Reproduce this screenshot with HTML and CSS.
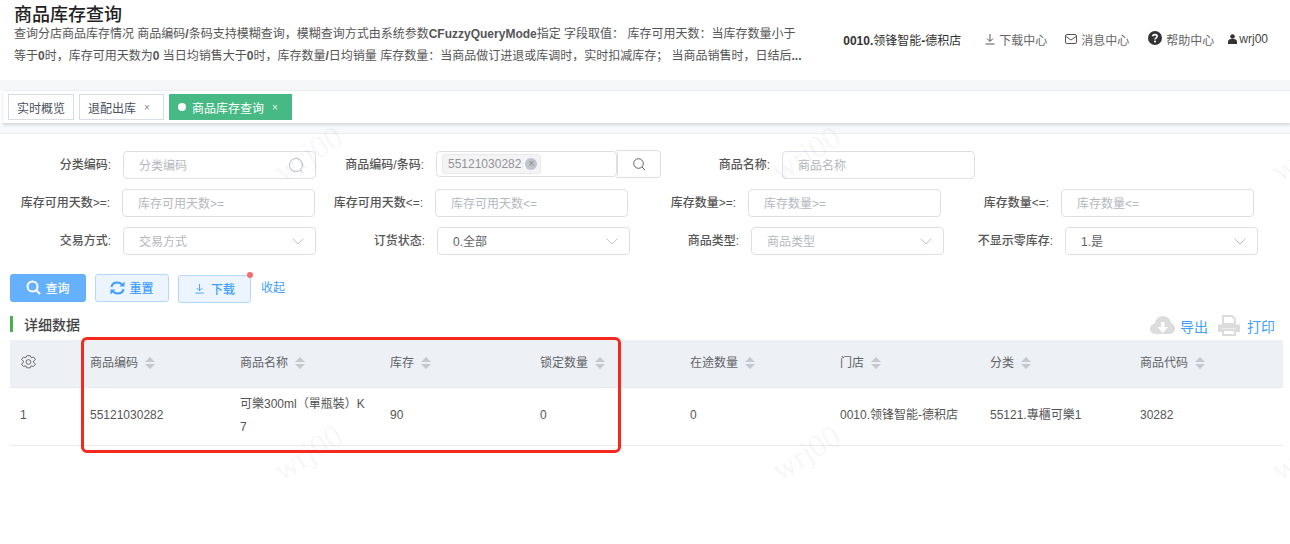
FILE: index.html
```html
<!DOCTYPE html>
<html lang="zh">
<head>
<meta charset="utf-8">
<title>商品库存查询</title>
<link rel="stylesheet" href="styles.css">
</head>
<body>
<svg class="defs" width="0" height="0" aria-hidden="true">
  <symbol id="sort" viewBox="0 0 10 12"><path d="M5 0l5 5H0zM5 12L0 7h10z"/></symbol>
  <symbol id="chev" viewBox="0 0 12 7"><path d="M.5.5L6 6l5.500-5.500" fill="none" stroke="currentColor"/></symbol>
  <symbol id="down" viewBox="0 0 12 12"><path d="M6 1v7M3 5.500L6 8.500l3-3M1.500 11h9" fill="none" stroke="currentColor"/></symbol>
</svg>
<header class="top">
  <div class="intro">
    <h1 class="title">商品库存查询</h1>
    <p class="desc">查询分店商品库存情况 商品编码<b>/</b>条码支持模糊查询，模糊查询方式由系统参数<b>CFuzzyQueryMode</b>指定 字段取值： 库存可用天数：当库存数量小于等于<b>0</b>时，库存可用天数为<b>0</b> 当日均销售大于<b>0</b>时，库存数量<b>/</b>日均销量 库存数量：当商品做订进退或库调时，实时扣减库存； 当商品销售时，日结后<b>...</b></p>
  </div>
  <nav class="tools">
    <span class="store"><b>0010.</b>领锋智能<b>-</b>德积店</span>
    <span class="tool t-dl"><svg class="ico ico-dl" width="12" height="12"><use href="#down"/></svg>下载中心</span>
    <span class="tool t-msg"><svg class="ico" width="12" height="12" viewBox="0 0 12 12"><rect x=".5" y="1.500" width="11" height="9" rx="1.500" fill="none" stroke="currentColor"/><path d="M1 3.500l5 3.500 5-3.500" fill="none" stroke="currentColor"/></svg>消息中心</span>
    <span class="tool t-help"><svg class="help" width="14" height="14" viewBox="0 0 14 14"><circle cx="7" cy="7" r="7" fill="#333"/><path d="M4.800 5.300C4.900 3 9.200 3 9.200 5.300 9.200 6.800 7 6.800 7 8.500" fill="none" stroke="#fff" stroke-width="1.600"/><rect x="6.100" y="9.600" width="1.800" height="1.800" fill="#fff"/></svg>帮助中心</span>
    <span class="user"><svg width="9" height="10" viewBox="0 0 9 10"><circle cx="4.500" cy="2.500" r="2.300" fill="#333"/><path d="M0 10V7.500C0 5.500 2 5 4.500 5S9 5.500 9 7.500V10z" fill="#333"/></svg>wrj00</span>
  </nav>
</header>
<div class="strip-a"></div>
<div class="tabs">
  <span class="tab tab-a">实时概览</span>
  <span class="tab tab-b">退配出库<i class="x">×</i></span>
  <span class="tab active"><i class="dot"></i>商品库存查询<i class="x">×</i></span>
</div>
<div class="strip-b"></div>
<main class="main">
  <div class="row">
    <div class="lab w123">分类编码:</div>
    <div class="inp ph">分类编码<svg class="mag" width="17" height="17" viewBox="0 0 17 17"><circle cx="8" cy="8" r="6.500" fill="none" stroke="currentColor"/><path d="M12.500 13l2 2.500" stroke="currentColor"/></svg></div>
    <div class="lab w120">商品编码/条码:</div>
    <div class="inp mid"><span class="chip">55121030282<i class="chip-x">×</i></span></div>
    <div class="sbtn"><svg width="13" height="13" viewBox="0 0 13 13"><circle cx="5.500" cy="5.500" r="4.800" fill="none" stroke="#606266"/><path d="M9 9l3 3" stroke="#606266"/></svg></div>
    <div class="lab w121">商品名称:</div>
    <div class="inp ph">商品名称</div>
  </div>
  <div class="row">
    <div class="lab w122">库存可用天数&gt;=:</div>
    <div class="inp ph">库存可用天数&gt;=</div>
    <div class="lab w120">库存可用天数&lt;=:</div>
    <div class="inp ph">库存可用天数&lt;=</div>
    <div class="lab w120">库存数量&gt;=:</div>
    <div class="inp ph">库存数量&gt;=</div>
    <div class="lab w120">库存数量&lt;=:</div>
    <div class="inp ph">库存数量&lt;=</div>
  </div>
  <div class="row">
    <div class="lab w123">交易方式:</div>
    <div class="inp ph">交易方式<svg class="chev" width="12" height="7"><use href="#chev"/></svg></div>
    <div class="lab w121">订货状态:</div>
    <div class="inp val">0.全部<svg class="chev" width="12" height="7"><use href="#chev"/></svg></div>
    <div class="lab w121">商品类型:</div>
    <div class="inp ph">商品类型<svg class="chev" width="12" height="7"><use href="#chev"/></svg></div>
    <div class="lab w121">不显示零库存:</div>
    <div class="inp val">1.是<svg class="chev" width="12" height="7"><use href="#chev"/></svg></div>
  </div>
  <div class="actions">
    <span class="btn primary"><svg width="15" height="15" viewBox="0 0 15 15"><circle cx="6.500" cy="6.500" r="5" fill="none" stroke="#fff" stroke-width="2"/><path d="M10 10l4 4" stroke="#fff" stroke-width="2.200"/></svg>查询</span>
    <span class="btn plain reset"><svg width="15" height="14" viewBox="0 0 15 14"><path d="M1.500 6C2 3 4.500 1.500 7.500 1.500c2 0 3.500 1 4.500 2M13.500 8c-.5 3-3 4.500-6 4.500-2 0-3.500-1-4.500-2" fill="none" stroke="#409eff" stroke-width="2"/><path d="M14.500 .5v5h-5zM.5 13.500v-5h5z" fill="#409eff"/></svg>重置</span>
    <span class="btn plain dl"><svg width="11" height="11"><use href="#down"/></svg>下载<i class="badge"></i></span>
    <span class="fold">收起</span>
  </div>
  <div class="section">
    <h2 class="sec-title">详细数据</h2>
    <div class="exports">
      <svg width="25" height="21" viewBox="0 0 25 21"><path d="M6 19C2.500 19 0 16.800 0 13.800 0 11 2 9 4.700 8.700 5.500 4 9 1 13 1c4.300 0 7.500 3 8 7 2.300.6 4 2.800 4 5.300 0 3-2.400 5.700-5.500 5.700z" fill="#dcdcdc"/><path d="M11 7h3.500v5H18l-5.300 6L7.500 12H11z" fill="#fff"/></svg>
      <span class="exp">导出</span>
      <svg class="print" width="22" height="21" viewBox="0 0 22 21"><path d="M5 1h9l3 3v5H5z" fill="none" stroke="#dcdcdc" stroke-width="2"/><path d="M0 9.500h22V17h-4v-3.500H4V17H0z" fill="#dcdcdc"/><path d="M5 15h12v5H5z" fill="none" stroke="#dcdcdc" stroke-width="2"/></svg>
      <span class="exp">打印</span>
    </div>
  </div>
  <table class="grid">
    <colgroup><col class="c0"><col class="c"><col class="c"><col class="c"><col class="c"><col class="c"><col class="c"><col class="c"><col></colgroup>
    <thead>
      <tr>
        <th><svg class="gear" width="15" height="14" viewBox="2 1 10 12" preserveAspectRatio="none"><path class="gear-line" d="M5.800.8h2.400l.5 1.700 1.700-.5 1.300 2.100-1.300 1.200v1.400l1.300 1.200-1.300 2.100-1.700-.5-.5 1.700H5.800l-.5-1.700-1.700.5-1.300-2.100 1.300-1.200V5.300L2.300 4.100 3.600 2l1.700.5z" transform="translate(0 .8)"/><ellipse class="gear-line" cx="7" cy="7" rx="1.600" ry="2"/></svg></th>
        <th>商品编码<svg class="sort" width="10" height="12"><use href="#sort"/></svg></th>
        <th>商品名称<svg class="sort" width="10" height="12"><use href="#sort"/></svg></th>
        <th>库存<svg class="sort" width="10" height="12"><use href="#sort"/></svg></th>
        <th>锁定数量<svg class="sort" width="10" height="12"><use href="#sort"/></svg></th>
        <th>在途数量<svg class="sort" width="10" height="12"><use href="#sort"/></svg></th>
        <th>门店<svg class="sort" width="10" height="12"><use href="#sort"/></svg></th>
        <th>分类<svg class="sort" width="10" height="12"><use href="#sort"/></svg></th>
        <th>商品代码<svg class="sort" width="10" height="12"><use href="#sort"/></svg></th>
      </tr>
    </thead>
    <tbody>
      <tr>
        <td>1</td><td>55121030282</td><td>可樂300ml（單瓶裝）K7</td><td>90</td><td>0</td><td>0</td><td>0010.领锋智能-德积店</td><td>55121.專櫃可樂1</td><td>30282</td>
      </tr>
    </tbody>
  </table>
  <span class="wm w-a">wrj00</span>
  <span class="wm w-b">wrj00</span>
  <span class="wm w-c">wrj00</span>
  <span class="wm w-d">wrj00</span>
  <span class="wm w-e">wrj00</span>
  <span class="wm w-f">wrj00</span>
  <div class="redbox"></div>
</main>
</body>
</html>
```
FILE: styles.css
```css
* { box-sizing: border-box; }
html, body { margin: 0; padding: 0; }
body {
  width: 1290px;
  height: 544px;
  overflow: hidden;
  background: #fff;
  font-family: "Liberation Sans", "Noto Sans CJK SC", sans-serif;
  font-size: 12px;
  color: #606266;
}
i { font-style: normal; }
.defs { position: absolute; }

.top { height: 80px; display: flex; justify-content: space-between; padding-left: 14px; }
.intro { width: 792px; }
.title { margin: 5px 0 0; font-size: 18px; line-height: 20px; font-weight: 500; color: #222; }
.desc { margin: -2px 0 0; font-size: 12px; line-height: 22px; color: #555; }
.tools { display: flex; align-items: center; padding-right: 22px; color: #666; height: 78px; }
.store { color: #333; margin-right: 23px; width: 118px; white-space: nowrap; }
.tool { display: flex; align-items: center; white-space: nowrap; }
.ico { margin-right: 4px; color: #555; }
.ico-dl { margin-right: 3px; }
.t-dl { margin-right: 18px; }
.t-msg { margin-right: 19px; }
.t-help { margin-right: 14px; }
.help { margin-right: 4px; position: relative; top: -1px; }
.user { display: flex; align-items: center; gap: 2px; color: #444; }

.strip-a { height: 10px; background: #f6f7f9; }
.tabs {
  height: 33px;
  margin-left: 3px;
  padding: 3px 0 0 5px;
  display: flex;
  gap: 5px;
  background: #fff;
  border-top: 1px solid #eceef2;
  box-shadow: 0 2px 3px rgba(0, 0, 0, .14);
  position: relative;
}
.tab {
  height: 26px;
  padding: 0 8px;
  display: flex;
  align-items: center;
  border: 1px solid #d8dce5;
  background: #fff;
  color: #495060;
  white-space: nowrap;
}
.tab-a { width: 66px; }
.tab-b { width: 85px; }
.x { margin-left: 8px; font-size: 10px; color: #888; }
.tab.active { width: 123px; background: #47b984; border-color: #47b984; color: #fff; }
.tab.active .x { color: #e4f5ec; }
.dot { width: 8px; height: 8px; border-radius: 50%; background: #fff; margin-right: 6px; }
.strip-b { height: 11px; background: #f7f8fb; border-bottom: 1px solid #eceef2; }

.main { position: relative; padding-top: 17px; height: 410px; }
.row { display: flex; height: 28px; margin-bottom: 10px; align-items: flex-start; }
.lab {
  height: 28px;
  line-height: 28px;
  padding-right: 12px;
  text-align: right;
  color: #555;
  font-weight: 500;
  white-space: nowrap;
}
.w120 { width: 120px; }
.w121 { width: 121px; }
.w122 { width: 122px; }
.w123 { width: 123px; }
.inp {
  position: relative;
  width: 193px;
  height: 28px;
  line-height: 28px;
  padding-left: 15px;
  border: 1px solid #dcdfe6;
  border-radius: 4px;
  background: #fff;
  white-space: nowrap;
}
.ph { color: #b4b8c0; }
.val { color: #606266; }
.mid { width: 181px; height: 26px; padding: 2px 0 0 5px; line-height: 20px; }
.chip {
  display: inline-flex;
  align-items: center;
  height: 20px;
  width: 99px;
  padding: 0 4px 0 5px;
  background: #f4f4f5;
  border: 1px solid #e9e9eb;
  border-radius: 3px;
  color: #909399;
}
.chip-x {
  width: 12px; height: 12px;
  margin-left: 4px;
  flex: none;
  border-radius: 50%;
  background: #c0c4cc;
  color: #8a8d93;
  font-size: 10px;
  line-height: 12px;
  text-align: center;
}
.sbtn {
  width: 44px;
  height: 28px;
  margin-top: -1px;
  display: flex;
  align-items: center;
  justify-content: center;
  border: 1px solid #dcdfe6;
  border-radius: 0 4px 4px 0;
  background: #fff;
}
.mag { position: absolute; right: 10px; top: 5px; color: #b8bcc4; }
.chev { position: absolute; right: 11px; top: 10px; color: #c0c4cc; }

.actions { display: flex; align-items: flex-start; height: 29px; margin-top: 19px; padding-left: 10px; }
.btn {
  display: flex;
  align-items: center;
  justify-content: center;
  height: 28px;
  padding-bottom: 1px;
  border-radius: 3px;
  white-space: nowrap;
  position: relative;
  font-weight: 500;
}
.primary { width: 76px; background: #66b1ff; color: #fff; gap: 4px; }
.plain { background: #ecf5ff; border: 1px solid #b3d8ff; color: #409eff; }
.reset { width: 74px; margin-left: 9px; gap: 4px; }
.dl { width: 73px; margin-left: 9px; margin-top: 1px; gap: 6px; }
.badge { position: absolute; right: -3px; top: -4px; width: 6px; height: 6px; border-radius: 50%; background: #f56c6c; }
.fold { margin-left: 10px; line-height: 28px; color: #409eff; }

.section { display: flex; justify-content: space-between; height: 25px; margin-top: 12px; padding: 0 15px 0 10px; }
.sec-title {
  margin: 1px 0 0;
  height: 16px;
  padding-left: 11px;
  border-left: 3px solid #4caf50;
  font-size: 14px;
  line-height: 18px;
  font-weight: 500;
  color: #444;
}
.exports { display: flex; align-items: center; height: 21px; }
.exp { margin-left: 5px; font-size: 14px; color: #409eff; }
.print { margin-left: 10px; margin-right: 2px; }

.grid { width: 1273px; margin-left: 10px; border-collapse: collapse; table-layout: fixed; }
.c0 { width: 70px; }
.c { width: 150px; }
.grid th {
  height: 47px;
  padding: 0 10px 3px;
  background: #edf0f5;
  text-align: left;
  font-weight: 400;
  color: #5f6368;
  border-bottom: 1px solid #e8eaec;
  white-space: nowrap;
}
.grid td {
  height: 58px;
  padding: 0 10px 1px;
  line-height: 23px;
  color: #555;
  border-bottom: 1px solid #e8eaec;
  word-break: break-all;
}
.sort { margin-left: 7px; vertical-align: -2px; fill: #c5c8ce; }
.gear { display: block; margin-left: 1px; }
.gear-line { fill: none; stroke: #707070; stroke-width: 1; vector-effect: non-scaling-stroke; stroke-linejoin: round; }

.wm {
  position: absolute;
  transform: translate(-50%, -50%) rotate(-32deg);
  font-family: "Liberation Serif", serif;
  font-size: 32px;
  color: rgba(0, 0, 0, .055);
  pointer-events: none;
  white-space: nowrap;
}
.w-a { left: 308px; top: 20px; }
.w-b { left: 806px; top: 20px; }
.w-c { left: 1306px; top: 20px; }
.w-d { left: 308px; top: 319px; }
.w-e { left: 806px; top: 319px; }
.w-f { left: 1306px; top: 319px; }

.redbox {
  position: absolute;
  left: 81px;
  top: 203px;
  width: 540px;
  height: 116px;
  border: 3px solid #f5291f;
  border-radius: 6px;
  pointer-events: none;
}
```
